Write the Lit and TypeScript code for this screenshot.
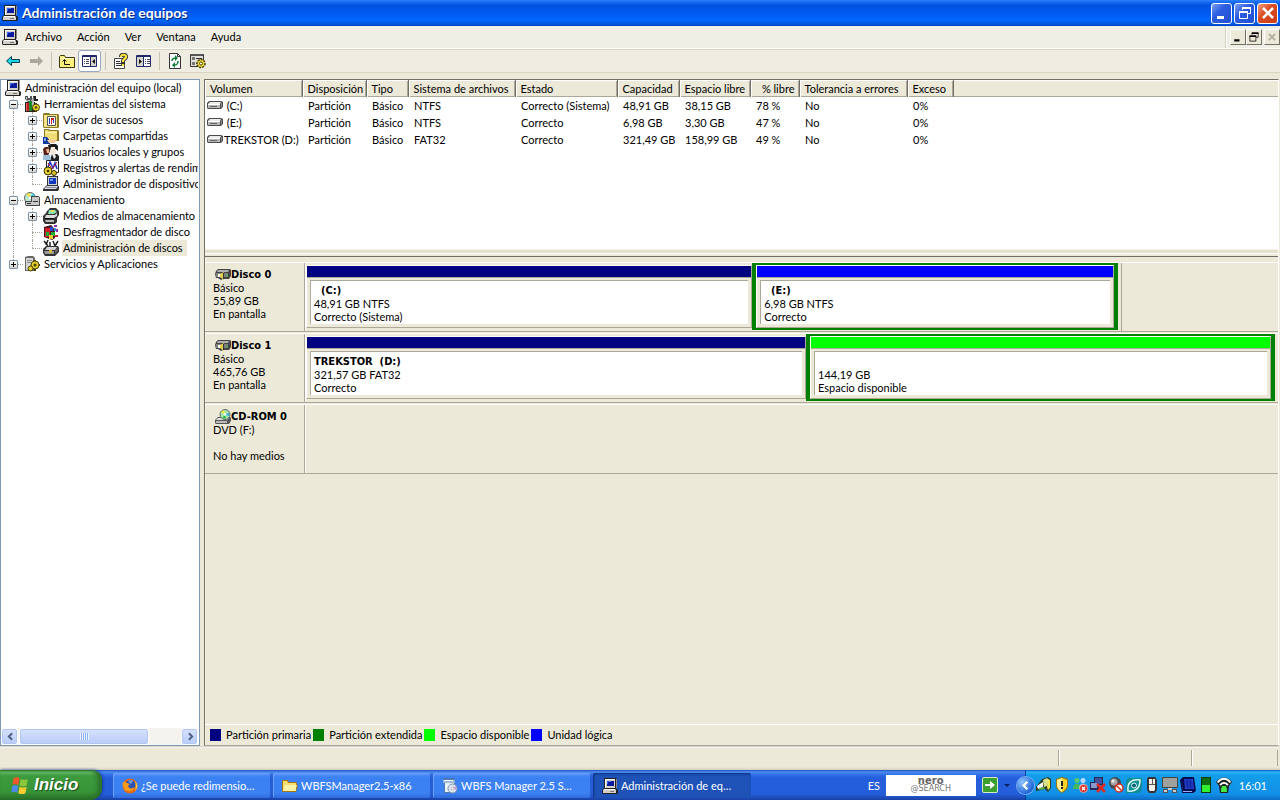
import { LitElement, html, svg, css, nothing, type TemplateResult } from "lit";
import { customElement, property, state } from "lit/decorators.js";
import { classMap } from "lit/directives/class-map.js";
import { styleMap } from "lit/directives/style-map.js";

const glyphs: Record<string, TemplateResult> = {
  computer: svg`<path fill="#222" d="M2 0h12l1 1v9h-1v1h1l1 1v3l-1 1H1l-1-1v-3l2-2z"/><path fill="#d4d0c8" d="M3 1h10v9H3z"/><path fill="#fff" d="M3 1h10v1H4v8H3z"/><path fill="#0a1a9c" d="M5 3h7v5H5z"/><path fill="#3a6af0" d="M5 3h4v1H6v2H5z"/><path fill="#888" d="M14 1h1v9h-1z"/><path fill="#d4d0c8" d="M2 11h11l1 1v3H1v-3z"/><path fill="#fff" d="M2 11h11v1H2z"/><path fill="#777" d="M8 13h4v1H8z"/>`,
  laptop: svg`<path fill="#333" d="M4 0h11v10h1v3l-1 2H0v-2l4-4z"/><path fill="#cfd3dc" d="M5 1h9v8H5z"/><path fill="#1238c0" d="M6 2h7v6H6z"/><path fill="#6f97f5" d="M7 3h3v2H7z"/><path fill="#d7dbe5" d="M4 10h11l-2 3H1z"/><path fill="#889" d="M4 11h9v1H3z"/>`,
  tools: svg`<path fill="#555" d="M1 0h3v2h2V0h2v4L6 6H4L1 3z"/><path fill="#c9c9c9" d="M2 1h1v3h3v1H4L2 3z"/><path fill="#222" d="M1 6h10v10H1z"/><path fill="#c02020" d="M2 7h3v8H2z"/><path fill="#e86060" d="M2 7h1v8H2z"/><path fill="#168a2c" d="M5 5h3v10H5z"/><path fill="#b8b8b8" d="M8 2h2v10H8z"/><path fill="#222" d="M9 0h3v3h2v2h-4z"/><circle cx="12" cy="11.500" r="3.500" fill="#e5cf30" stroke="#4a4200"/><circle cx="12" cy="11.500" r="1.200" fill="#4a4200"/><path fill="#4a4200" d="M11 7h2v1h-2zM11 15h2v1h-2z"/>`,
  events: svg`<path fill="#8c7a20" d="M0 2l1-1h5l1 1h8l1 1v12l-1 1H1l-1-1z"/><path fill="#f3e58a" d="M1 3h13v12H1z"/><path fill="#fff" stroke="#555" d="M4.500 4.500h8v9h-8z"/><path fill="#2a3cd0" d="M6 6h1v6H6zM10 8h1v3h-1z"/><path fill="#d02020" d="M8 6h3v2H9v4H8z"/>`,
  sharedFolder: svg`<path fill="#8c7a20" d="M1 1h5l1 1h8l1 1v10H1z"/><path fill="#f0dd78" d="M2 2h3l1 1h8v9H2z"/><path fill="#fff6b8" d="M2 4h12v1H2z"/><path fill="#123a9c" d="M0 9h4l3 4v3H0z"/><path fill="#7fa2e8" d="M1 10h2v3H1z"/><path fill="#f4c9a0" d="M4 12h9l1 1-3 2H6z"/>`,
  users: svg`<path fill="#191919" d="M5 1l3-1h5l2 2v5l-2-2H9L6 7z"/><path fill="#f7e8dc" d="M8 3h5v6l-2 2H9L7 7z"/><path fill="#222" d="M12 3h1v2h-1zM9 10h5l2 2v4H7z"/><path fill="#e8e8e8" d="M9 10h3l1 3-2 2z"/><path fill="#5a2018" d="M0 5l2-2h3l2 4-2 5H1z"/><path fill="#e8b896" d="M3 5h3v4H4z"/><path fill="#9cc0dc" d="M0 11h7l1 5H0z"/>`,
  perf: svg`<path fill="#fff" stroke="#222" d="M3.500.500h12v12h-12z"/><path fill="none" stroke="#1428c8" stroke-width="1.500" d="M5 7l2-5 3 6 2-5 2 6"/><path fill="none" stroke="#d02020" d="M5 3l4 6 5-7"/><circle cx="5" cy="11" r="4" fill="#e5cf30" stroke="#3a3400"/><circle cx="5" cy="11" r="1.300" fill="#3a3400"/><circle cx="11" cy="13" r="2.500" fill="#d8c030" stroke="#3a3400"/>`,
  storage: svg`<circle cx="6" cy="6" r="5.500" fill="#b8e8d0" stroke="#666"/><path fill="#f0e040" d="M6 6L2 2l4-1z"/><path fill="#40c8e0" d="M6 6l5-2-2-3z"/><circle cx="6" cy="6" r="1.300" fill="#fff"/><path fill="#444" d="M7 4h8l1 2v8H2l-1-2V9h6z"/><path fill="#c8c8c8" d="M8 5h7v8H8zM2 10h6v3H2z"/><path fill="#333" d="M9 9h5v1H9zM3 11h4v1H3z"/>`,
  removable: svg`<path fill="#333" d="M4 3l3-3h6l3 3v4l-2 3v4l-2 2H2l-2-3V8l3-3z"/><path fill="#8ee0b0" d="M6 2h6l2 2-3 2H5z"/><path fill="#f4e65a" d="M8 2h3v2H8z"/><path fill="#ddd" d="M3 7h9l2-2v3l-3 2H2z"/><path fill="#111" d="M2 10h9v1H2z"/><path fill="#bbb" d="M2 12h9v2H3z"/>`,
  defrag: svg`<path fill="#501018" d="M1 3l7-2 2 2 2 4v7l-3 2-8-3z"/><path fill="#d02028" d="M2 4h5v9H2z"/><path fill="#2848d0" d="M7 3h3v4H7z"/><path fill="#20a838" d="M3 8h3v4H3zM8 8h4v4H8z"/><path fill="#e8d030" d="M6 11h4v4H6z"/><path fill="#9030b0" d="M11 1h3v2h-3zM13 5h2v3h-2z"/><path fill="#2898d0" d="M11 4h2v3h-2z"/><path fill="#d02028" d="M12 11h3v2h-3z"/>`,
  diskMgmt: svg`<path fill="none" stroke="#222" stroke-width="1.500" d="M1 1l4 5M5 0L3 5M10 1l2 5M15 1l-3 5M7 2v4"/><path fill="#333" d="M3 6h12l1 2v4l-4 4H2l-2-3V9z"/><path fill="#d4d4d4" d="M4 7h10l-2 3H2z"/><path fill="#999" d="M1 11h10v3H2z"/><path fill="#666" d="M12 10l3-2v3l-3 3z"/><path fill="#d8b830" d="M6 10h3v3H6z"/>`,
  services: svg`<path fill="#666" d="M1 1l3-1h5l2 2v13H1z"/><path fill="#d8d8d4" d="M2 2h7v12H2z"/><path fill="#888" d="M3 4h5v1H3zM3 6h5v1H3z"/><circle cx="11" cy="9" r="4" fill="#e5cf30" stroke="#4a4200"/><circle cx="11" cy="9" r="1.500" fill="#4a4200"/><circle cx="6.500" cy="12.500" r="2.500" fill="#e5cf30" stroke="#4a4200"/><path fill="#4a4200" d="M10 4h2v1h-2zM10 13h2v2h-2zM15 8h1v2h-1z"/>`,
  back: svg`<path fill="#18d8e8" stroke="#053c50" d="M1.500 8l5-4.500v3h8v3h-8v3z"/>`,
  forward: svg`<path fill="#aaa89c" d="M15 8l-5-5v3H2v4h8v3z"/>`,
  up: svg`<path fill="#fdf07c" stroke="#3c3608" d="M.500 14.500v-11l1-1h4l1 2h9v10z"/><path fill="#fffbc8" d="M1 5h14v1H1z"/><path fill="none" stroke="#111" d="M5.500 7v4.500H11M3.500 8.500l2-2 2 2"/>`,
  treeToggle: svg`<path fill="#fff" stroke="#22286c" d="M.500 2.500h14v11H.500z"/><path fill="#22286c" d="M1 2h13v2H1zM8 4h1v10H8z"/><path fill="#d6d4ca" d="M9 4h5v9H9z"/><path stroke="#446" d="M2 6.500h1M4 6.500h3M2 8.500h1M4 8.500h3M2 10.500h1M4 10.500h3"/><path fill="#111" d="M13 6v5L10 8.500z"/>`,
  paneToggle: svg`<path fill="#fff" stroke="#22286c" d="M.500 2.500h14v11H.500z"/><path fill="#22286c" d="M1 2h13v2H1zM7 4h1v10H7z"/><path fill="#d6d4ca" d="M1 4h6v9H1z"/><path stroke="#446" d="M9 6.500h1M11 6.500h3M9 8.500h1M11 8.500h3M9 10.500h1M11 10.500h3"/><path fill="#111" d="M3 6v5l3-2.500z"/>`,
  help: svg`<path fill="#fff" stroke="#444" d="M1.500 5.500h10v10h-10z"/><path fill="#333" d="M3 8h4v1H3zM3 10h6v1H3zM3 12h6v1H3z"/><path fill="none" stroke="#333" stroke-width="4" d="M8 4c0-3 5-3 5 0 0 2-3 2-3 4v4"/><path fill="none" stroke="#fbe83a" stroke-width="2.200" d="M8 4c0-3 5-3 5 0 0 2-3 2-3 4v1M10 11v2"/>`,
  refresh: svg`<path fill="#fff" stroke="#333" d="M2.500.500h8l3 3v12h-11z"/><path fill="none" stroke="#333" d="M10.500.500v3h3"/><path fill="none" stroke="#12803a" stroke-width="1.500" d="M5 8c0-3 2-3 4-3M11 8c0 4-2 4-4 4"/><path fill="#12803a" d="M8 2l3 3-3 3zM8 9v6l-3-3z"/>`,
  settings: svg`<path fill="#e4e2d8" stroke="#333" d="M.500 1.500h13v12H.500z"/><path fill="#555" d="M1 1h12v2H1z"/><path fill="#777" d="M2 4h3v3H2zM2 9h3v3H2z"/><path stroke="#333" d="M6 5.500h6M6 10.500h2"/><circle cx="11" cy="10.500" r="4" fill="#f0dc40" stroke="#4a4200" stroke-dasharray="2 1" stroke-width="1.500"/><circle cx="11" cy="10.500" r="1.500" fill="#fff" stroke="#4a4200"/>`,
  drive: svg`<path fill="#4c4c4c" d="M2 3h12l2 1v5l-2 2H1l-1-1V5z"/><path fill="#ececec" d="M3 4h11l-1 2H1z"/><path fill="#b8b8b8" d="M1 6h12v4H1z"/><path fill="#888" d="M14 5h1v4l-1 1z"/><path fill="#fff" d="M1 6h12v1H1z"/><path fill="#666" d="M3 8h7v1H3z"/>`,
  disk: svg`<path fill="#444" d="M3 2h12l1 1v6l-2 3H8l-2 1-3-2H1L0 7l1-3z"/><path fill="#b0b0b0" d="M3 3h11l-1 2H2z"/><path fill="#808080" d="M1 6h12v4H1z"/><path fill="#e0cf50" d="M5 7l4-2v8L5 10z"/><path fill="#fff" d="M3 7h2v3H3z"/><path fill="#333" d="M8 6h1v6H8z"/><path fill="#20c838" d="M11 8h2v1h-2z"/>`,
  cdrom: svg`<path fill="#555" d="M3 8h12l1 1v3l-2 3H1l-1-1v-3z"/><path fill="#e0e0dc" d="M3 9h11l-2 2H1z"/><path fill="#bbb" d="M1 12h11v2H1z"/><circle cx="10" cy="5.500" r="5" fill="#a8e4a8" stroke="#666"/><path fill="#f6ee40" d="M10 5.500L6 3l3-2z"/><path fill="#38b8d8" d="M10 5.500l4-2v4z"/><path fill="#28b848" d="M10 5.500l-3 4h4z"/><circle cx="10" cy="5.500" r="1.300" fill="#fff"/>`,
  firefox: svg`<circle cx="8" cy="8" r="7.500" fill="#e66a10"/><circle cx="8.500" cy="7" r="5" fill="#2a50b0"/><path fill="#6fa4e8" d="M6 3c2-1 4-1 5 0L9 6z"/><path fill="#f89a1c" d="M1 4c2 0 3 0 4 1l3 1-2 2c1 3 4 3 6 1 0 4-4 5-7 4C2 12 0 8 1 4z"/><path fill="#fcd040" d="M13 3c3 3 3 7 0 10 1-3 1-6 0-10z"/>`,
  folder: svg`<path fill="#a87810" d="M0 3l1-1h5l1 2h7l1 1v2h1l-2 7H1l-1-1z"/><path fill="#f8de70" d="M1 3h4l1 2h8v8H1z"/><path fill="#fdf3a8" d="M3 7h12l-2 6H1z"/>`,
  installer: svg`<path fill="#5078a8" d="M2 0h9l2 2v13H2z"/><path fill="#e8f0f8" d="M3 3h9v11H3z"/><path fill="#9cb8d8" d="M1 2h12v3H1z"/><path fill="#fff" d="M2 2h9v1H2z"/><circle cx="10.500" cy="10.500" r="4.500" fill="#dce6f2" stroke="#7c94b4"/><path fill="#c8a0e0" d="M10 10l4-2v4z"/><circle cx="10.500" cy="10.500" r="1.300" fill="#fff" stroke="#888" stroke-width=".5"/>`,
  flag: svg`<path fill="#f0582c" d="M3 2c2-1.500 4-1 5 0L7 7.500c-2-1-3.500-1-5 0z"/><path fill="#8cc83c" d="M9 2.500c2 1 4 1 6 0L14 8c-2 1-4 1-6 0z"/><path fill="#4c8cf0" d="M2 8.500c1.500-1 3-1 5 0L6 14c-2-1-3.500-1-5 0z"/><path fill="#fccc30" d="M8 9c2 1 4 1 6 0l-1 5.500c-2 1-4 1-6 0z"/>`,
  power: svg`<path fill="#2c3c28" d="M6 2l6-2 3 2v9l-3 4-3-3-9 2v-4z"/><path fill="#d8e090" d="M7 3l4-2 2 2-2 6-3 1z"/><path fill="#fff" d="M1 9l6-4v5l-5 2z"/><path fill="#60b040" d="M3 11l5-1 1 2-6 1z"/><path fill="#f4e850" d="M12 2l2 1v8l-2 2-1-3z"/>`,
  shield: svg`<path fill="#9c7400" d="M8 0l6 2v6c0 4-3 6-6 8-3-2-6-4-6-8V2z"/><path fill="#fcd428" d="M8 1l5 2v5c0 3-2 5-5 7-3-2-5-4-5-7V3z"/><path fill="#fff09c" d="M8 1v14c-3-2-5-4-5-7V3z"/><path fill="#222" d="M7 4h2v5H7zM7 10h2v2H7z"/>`,
  people: svg`<circle cx="5" cy="3.500" r="2.500" fill="#58c868"/><path fill="#48b858" d="M1 12c0-7 8-7 8 0z"/><circle cx="11" cy="3.500" r="2.500" fill="#b8d8fc"/><path fill="#a8ccf8" d="M7 11c0-6 8-6 8 0z"/><circle cx="11.500" cy="11.500" r="4" fill="#d82820" stroke="#f8c8c0" stroke-width=".7"/><path stroke="#fff" stroke-width="1.500" d="M10 10l3 3M13 10l-3 3"/>`,
  netOff: svg`<path fill="#222850" d="M4 0h9v8H4zM0 5h9v8H0z"/><path fill="#40509c" d="M5 1h7v6H5z"/><path fill="#8c98cc" d="M1 6h6v5H1z"/><path stroke="#e02820" stroke-width="2.500" d="M7 7l8 8M15 7l-8 8"/>`,
  soundOff: svg`<circle cx="7" cy="6" r="6" fill="#484848"/><circle cx="6" cy="5" r="3.500" fill="#a8a8a8"/><circle cx="5" cy="4" r="1.500" fill="#eee"/><circle cx="11" cy="11" r="4" fill="#fff" stroke="#d03020" stroke-width="1.500"/><path stroke="#d03020" stroke-width="1.500" d="M8 8l6 6"/>`,
  eye: svg`<path fill="#128c94" d="M5 1h11v9c0 4-2 6-6 6H0V6c0-3 1-5 5-5z"/><path fill="none" stroke="#d8fcf4" stroke-width="1.500" d="M2 14C1 6 5 2 14 3c0 8-4 12-12 11z"/><circle cx="8" cy="8.500" r="2.500" fill="#0c6074" stroke="#d8fcf4"/>`,
  mouse: svg`<path fill="#333" d="M4 0h7l2 3v10l-2 3H5l-2-3V2z"/><path fill="#f4f0e4" d="M5 2h6v11l-1 1H6l-1-1z"/><path fill="#555" d="M8 2h1v5H8zM5 7h6v1H5z"/>`,
  display: svg`<path fill="#a0a09c" stroke="#444" d="M.500.500h15v10H.500z"/><path fill="#555" d="M1 12h5v4H1zM10 12h5v4h-5z"/><path fill="#ccc" d="M2 13h3v2H2zM11 13h3v2h-3zM6 11h4v2H6z"/>`,
  chip: svg`<path fill="#060c50" d="M3 0h11l2 14-3 2H2L0 3z"/><path fill="#2444d8" d="M4 2h9l1 10H5z"/><path stroke="#0a1880" stroke-width=".6" d="M4 4h8M4 6h9M5 8h8M5 10h8M7 2l1 10M10 2l1 10"/><path fill="#9cb0f0" d="M1 4l2 10h9v1H3z"/>`,
  meter: svg`<path fill="#0c3c0c" d="M3 0h10v16H3z"/><path fill="#0c6c10" d="M4 1h8v7H4z"/><path fill="#30f030" d="M4 8h8v7H4z"/>`,
  wifi: svg`<path fill="#222" d="M0 5c4-6 12-6 16 0l-3 4-1 7H4L3 9z"/><path fill="none" stroke="#fff" stroke-width="1.800" d="M1.500 5.500c4-5 9-5 13 0M4 8c3-3 5-3 8 0"/><path fill="#40e840" d="M6 9h4l1 3v3H5v-3z"/>`,
  goArrow: svg`<rect width="16" height="16" rx="2" fill="#d4ecc8"/><rect x="1" y="1" width="14" height="14" rx="1" fill="#3ca030"/><path fill="#fff" d="M3 7h5V4l5 4-5 4V9H3z"/>`,
  chevronLeft: svg`<path fill="none" stroke="currentColor" stroke-width="2.500" d="M10 4L6 8l4 4"/>`,
  chevronRight: svg`<path fill="none" stroke="currentColor" stroke-width="2.500" d="M6 4l4 4-4 4"/>`,
  minimize: svg`<path fill="currentColor" d="M3 11h7v3H3z"/>`,
  restore: svg`<path fill="none" stroke="currentColor" d="M5.500 5V2.500h8v6H11"/><path fill="currentColor" d="M5 2h9v2H5zM2 6h9v2H2z"/><path fill="none" stroke="currentColor" d="M2.500 6.500h8v7h-8z"/>`,
  close: svg`<path fill="none" stroke="currentColor" stroke-width="2.500" d="M3 3l10 10M13 3L3 13"/>`,
};

const icon = (name: string, size = 16) =>
  html`<svg class="icon" width=${size} height=${size} viewBox="0 0 16 16" aria-hidden="true">${glyphs[name]}</svg>`;

const shared = css`
  :host { font-family: Lato, "Open Sans", sans-serif; font-size: 11px; color: #000; }
  * { box-sizing: border-box; }
  .icon { display: block; flex: none; }
  button { font: inherit; color: inherit; margin: 0; padding: 0; border: 0; background: none; }
`;

interface Node { label: string; icon: string; depth: number; box?: "+" | "-"; last?: boolean; }

const tree: Node[] = [
  { label: "Administración del equipo (local)", icon: "computer", depth: 0 },
  { label: "Herramientas del sistema", icon: "tools", depth: 1, box: "-" },
  { label: "Visor de sucesos", icon: "events", depth: 2, box: "+" },
  { label: "Carpetas compartidas", icon: "sharedFolder", depth: 2, box: "+" },
  { label: "Usuarios locales y grupos", icon: "users", depth: 2, box: "+" },
  { label: "Registros y alertas de rendimiento", icon: "perf", depth: 2, box: "+" },
  { label: "Administrador de dispositivos", icon: "laptop", depth: 2, last: true },
  { label: "Almacenamiento", icon: "storage", depth: 1, box: "-" },
  { label: "Medios de almacenamiento extraíbles", icon: "removable", depth: 2, box: "+" },
  { label: "Desfragmentador de disco", icon: "defrag", depth: 2 },
  { label: "Administración de discos", icon: "diskMgmt", depth: 2, last: true },
  { label: "Servicios y Aplicaciones", icon: "services", depth: 1, box: "+", last: true },
];

@customElement("console-tree")
class ConsoleTree extends LitElement {
  @state() selected = 10;
  static styles = [shared, css`
    :host { display: flex; flex-direction: column; background: #fff; border: 1px solid #7f9db9; overflow: hidden; min-width: 0; padding-right: 1px; }
    ul { list-style: none; margin: 0; padding: 0 0 0 3px; flex: 1; overflow: hidden; }
    li { display: flex; height: 16px; align-items: center; white-space: nowrap; }
    .cell { width: 19px; height: 16px; flex: none; display: grid; grid-template-columns: 9px 10px; align-items: center; }
    .line { border-right: 1px dotted #a8a598; height: 16px; width: 10px; grid-area: 1 / 1; }
    .line.half { height: 8px; align-self: start; }
    .dash { border-top: 1px dotted #a8a598; grid-area: 1 / 2; }
    .box { grid-area: 1 / 1 / 2 / 3; width: 9px; height: 9px; margin-left: 5px; border: 1px solid #7b92ad; border-radius: 1px; background: linear-gradient(#fff, #d8d3c6); display: grid; place-items: center; }
    .box svg { display: block; }
    .icon { margin-left: 1px; }
    .label { margin-left: 3px; padding: 0 4px 0 1px; height: 16px; line-height: 16px; }
    .selected { background: #ece9d8; }
    .scroll { display: flex; height: 17px; background: #f4f3ee; gap: 1px; }
    .arrow, .thumb { border: 1px solid #fff; border-radius: 3px; background: linear-gradient(#d6e2fd, #b9ccf8); box-shadow: inset 0 0 0 1px #b2c6f4; color: #4d6185; display: grid; place-items: center; }
    .arrow { width: 17px; height: 17px; }
    .thumb { flex: 0 0 66%; }
    .gap { flex: 1; }
    .grip { width: 9px; height: 7px; background: repeating-linear-gradient(90deg, #eef4fe 0 1px, #8cb0f8 1px 2px); }
  `];
  row(n: Node, i: number) {
    return html`<li role="treeitem" aria-level=${n.depth + 1} aria-selected=${i === this.selected} @click=${() => (this.selected = i)}>
      ${n.depth === 2 ? html`<span class="cell"><span class="line"></span></span>` : nothing}
      ${n.depth > 0 ? html`<span class="cell">
        <span class=${classMap({ line: true, half: !!n.last })}></span><span class="dash"></span>
        ${n.box ? html`<button class="box" aria-label=${n.label}><svg width="5" height="5" viewBox="0 0 5 5"><path fill="#000" d=${n.box === "+" ? "M0 2h5v1H0zM2 0h1v5H2z" : "M0 2h5v1H0z"} /></svg></button>` : nothing}
      </span>` : nothing}
      ${icon(n.icon)}<span class=${classMap({ label: true, selected: i === this.selected })}>${n.label}</span></li>`;
  }
  render() {
    return html`<ul role="tree">${tree.map((n, i) => this.row(n, i))}</ul>
      <div class="scroll"><button class="arrow" aria-label="Izquierda">${icon("chevronLeft", 13)}</button><span class="thumb"><span class="grip"></span></span><span class="gap"></span><button class="arrow" aria-label="Derecha">${icon("chevronRight", 13)}</button></div>`;
  }
}

const columns: [string, number][] = [
  ["Volumen", 97], ["Disposición", 64], ["Tipo", 42], ["Sistema de archivos", 107], ["Estado", 102],
  ["Capacidad", 62], ["Espacio libre", 71], ["% libre", 49], ["Tolerancia a errores", 108], ["Exceso", 46],
];
const volumes = [
  [" (C:)", "Partición", "Básico", "NTFS", "Correcto (Sistema)", "48,91 GB", "38,15 GB", "78 %", "No", "0%"],
  [" (E:)", "Partición", "Básico", "NTFS", "Correcto", "6,98 GB", "3,30 GB", "47 %", "No", "0%"],
  ["TREKSTOR (D:)", "Partición", "Básico", "FAT32", "Correcto", "321,49 GB", "158,99 GB", "49 %", "No", "0%"],
];

@customElement("volume-list")
class VolumeList extends LitElement {
  static styles = [shared, css`
    :host { display: block; background: #fff; overflow: hidden; }
    .head { background: #ece9d8; box-shadow: inset 0 -1px #aca899, inset 0 1px #fff; height: 17px; }
    table { table-layout: fixed; border-collapse: collapse; width: 0; }
    th { height: 17px; padding: 0 4px 0 5px; text-align: left; font-weight: normal; white-space: nowrap; background: #ece9d8; border-right: 1px solid #716f64; box-shadow: inset 1px 1px #fff, inset -1px -1px #aca899; }
    td { height: 17px; padding: 0 0 0 6px; white-space: nowrap; line-height: 15px; }
    tr td:first-child { padding-left: 2px; }
    .num { text-align: right; }
    .vol { display: flex; align-items: center; gap: 1px; white-space: pre; }
  `];
  render() {
    return html`<div class="head"><table>
      <colgroup>${columns.map(([, w]) => html`<col style=${styleMap({ width: w + "px" })}>`)}</colgroup>
      <thead><tr>${columns.map(([c]) => html`<th class=${classMap({ num: c === "% libre" })}>${c}</th>`)}</tr></thead>
      <tbody>${volumes.map((v) => html`<tr>${v.map((c, i) => i === 0 ? html`<td><span class="vol">${icon("drive")}${c}</span></td>` : html`<td>${c}</td>`)}</tr>`)}</tbody>
    </table></div>`;
  }
}

interface Part { name: string; size: string; status: string; kind: "primary" | "logical" | "free"; share: number; }
interface Disk { name: string; icon: string; lines: string[]; span: number; parts: Part[]; }

const disks: Disk[] = [
  { name: "Disco 0", icon: "disk", lines: ["Básico", "55,89 GB", "En pantalla"], span: 84, parts: [
    { name: "  (C:)", size: "48,91 GB NTFS", status: "Correcto (Sistema)", kind: "primary", share: 446 },
    { name: "  (E:)", size: "6,98 GB NTFS", status: "Correcto", kind: "logical", share: 358 },
  ] },
  { name: "Disco 1", icon: "disk", lines: ["Básico", "465,76 GB", "En pantalla"], span: 100, parts: [
    { name: "TREKSTOR  (D:)", size: "321,57 GB FAT32", status: "Correcto", kind: "primary", share: 500 },
    { name: " ", size: "144,19 GB", status: "Espacio disponible", kind: "free", share: 461 },
  ] },
  { name: "CD-ROM 0", icon: "cdrom", lines: ["DVD (F:)", "\u00a0", "No hay medios"], span: 100, parts: [] },
];

@customElement("disk-map")
class DiskMap extends LitElement {
  static styles = [shared, css`
    :host { display: flex; flex-direction: column; background: #ece9d8; line-height: 13px; }
    .rows { flex: 1; display: flex; flex-direction: column; gap: 1px; padding-top: 5px; }
    .disk { display: flex; height: 70px; border-top: 1px solid #fff; border-bottom: 1px solid #aca899; }
    .label { width: 100px; flex: none; padding: 5px 0 0 8px; border-right: 1px solid #aca899; box-shadow: 1px 0 #fff; }
    .name { display: flex; align-items: center; height: 13px; padding-left: 2px; }
    .bold { font-family: "DejaVu Sans Condensed", "DejaVu Sans", sans-serif; font-weight: bold; white-space: pre; }
    .track { flex: 1; min-width: 0; }
    .parts { display: flex; height: 68px; padding: 0 3px 1px 1px; }
    .parts.partial { border-right: 1px solid #aca899; }
    .part { display: flex; flex-direction: column; min-width: 0; flex-basis: 0; padding: 2px 0; }
    .inner { flex: 1; display: flex; flex-direction: column; border: 1px solid #aca899; border-top-color: #fff; border-left-color: #fff; }
    .boxed { border: 4px solid #008000; border-top-width: 2px; border-bottom-width: 2px; padding: 0; }
    .bar { height: 12px; border-bottom: 1px solid #aca899; }
    .primary .bar, .swatch.primary { background: #000080; }
    .logical .bar, .swatch.logical { background: #0000ff; }
    .free .bar, .swatch.free { background: #00ff00; }
    .swatch.extended { background: #008000; }
    .info { flex: 1; margin: 2px 3px 3px; padding: 3px 3px 0; background: #fff; border-left: 1px solid #aca899; border-top: 1px solid #aca899; white-space: pre; overflow: hidden; }
    .legend { display: flex; height: 20px; margin-bottom: 1px; align-items: center; border-top: 1px solid #fff; padding-left: 5px; gap: 2px; }
    .item { display: flex; align-items: center; gap: 5px; }
    .swatch { width: 11px; height: 12px; }
  `];
  part(p: Part) {
    return html`<div class=${classMap({ part: true, [p.kind]: true, boxed: p.kind !== "primary" })} style=${styleMap({ flexGrow: String(p.share) })}>
      <div class="inner"><div class="bar"></div><div class="info"><div class="bold">${p.name}</div><div>${p.size}</div><div>${p.status}</div></div></div>
    </div>`;
  }
  render() {
    return html`<div class="rows">${disks.map((d) => html`<section class="disk">
        <div class="label"><div class="name bold">${icon(d.icon)}${d.name}</div>${d.lines.map((l) => html`<div>${l}</div>`)}</div>
        <div class="track">${d.parts.length ? html`<div class=${classMap({ parts: true, partial: d.span < 100 })} style=${styleMap({ width: d.span + "%" })}>${d.parts.map((p) => this.part(p))}</div>` : nothing}</div>
      </section>`)}</div>
      <div class="legend">
        ${[["primary", "Partición primaria"], ["extended", "Partición extendida"], ["free", "Espacio disponible"], ["logical", "Unidad lógica"]].map(([k, t]) => html`<span class="item"><span class="swatch ${k}"></span>${t}</span>`)}
      </div>`;
  }
}

@customElement("task-bar")
class TaskBar extends LitElement {
  @property({ type: String }) time = "16:01";
  static styles = [shared, css`
    :host { display: flex; height: 30px; color: #fff; background: linear-gradient(#1f4fc0 0, #4a8cf0 2px, #2f6ce4 5px, #245edb 8px, #245edb 24px, #1941a5 30px); }
    .start { width: 102px; display: flex; align-items: center; gap: 5px; padding-left: 10px; border-radius: 0 10px 12px 0; font: italic bold 17px "Liberation Sans", sans-serif; text-shadow: 1px 1px 1px #1c4a1c; background: linear-gradient(#2f7a2f 0, #6cc06c 2px, #3d9a3d 6px, #379437 22px, #286f28 30px); box-shadow: inset -4px 0 5px #2a6e2a, 1px 0 3px #173a9c; }
    .tasks { flex: 1; display: flex; gap: 2px; padding: 3px 0 0 11px; min-width: 0; }
    .task { width: 158px; height: 25px; display: flex; align-items: center; gap: 3px; padding: 0 9px; border-radius: 2px; text-align: left; white-space: nowrap; background: linear-gradient(#5c9afc, #3c81f3 4px, #3c81f3 20px, #2f6ad8); box-shadow: inset 1px 1px #6ca2fc, inset -1px 0 #2a5cc8; }
    .active { background: #1e52b7; box-shadow: inset 1px 1px 2px #0f2f7c; }
    .extras { display: flex; align-items: center; }
    .lang { width: 18px; }
    .search { display: grid; width: 90px; height: 21px; background: #fff; }
    .search input { grid-area: 1 / 1; width: 100%; height: 21px; border: 0; padding: 0; background: transparent; }
    .logo { grid-area: 1 / 1; display: grid; place-items: center; align-content: center; line-height: 8px; font-family: "DejaVu Sans", sans-serif; font-weight: bold; pointer-events: none; }
    .nero { font-size: 10px; color: #666; }
    .at { font-size: 8px; font-weight: normal; color: #777; }
    .go { margin-left: 6px; }
    .drop { width: 27px; display: grid; place-items: center; padding-right: 9px; }
    .drop::after { content: ""; border: 3px solid transparent; border-top-color: #0a2060; border-bottom: 0; }
    .tray { display: flex; align-items: center; gap: 2px; padding-right: 13px; background: linear-gradient(#0c59b9 0, #2cb4f8 2px, #139ee9 5px, #1290e8 24px, #0c6cc4 30px); border-left: 1px solid #0a3c98; }
    .hide { width: 17px; height: 17px; margin-left: -9px; border-radius: 50%; background: radial-gradient(circle at 5px 5px, #8cc4fc, #2468d8 12px); box-shadow: 0 0 0 1px #7cb0f0; display: grid; place-items: center; }
    .clock { margin-left: 5px; }
  `];
  render() {
    const tasks: [string, string][] = [["firefox", "¿Se puede redimensio…"], ["folder", "WBFSManager2.5-x86"], ["installer", "WBFS Manager 2.5 S…"], ["computer", "Administración de eq…"]];
    return html`<button class="start">${icon("flag", 19)}Inicio</button>
      <div class="tasks">${tasks.map(([i, t], n) => html`<button class=${classMap({ task: true, active: n === 3 })}>${icon(i)}${t}</button>`)}</div>
      <div class="extras"><span class="lang">ES</span>
        <label class="search"><input type="text" aria-label="nero search"><span class="logo"><span class="nero">nero</span><span class="at">@SEARCH</span></span></label>
        <button class="go" aria-label="Buscar">${icon("goArrow")}</button><button class="drop" aria-label="Opciones"></button></div>
      <div class="tray"><button class="hide" aria-label="Ocultar iconos">${icon("chevronLeft", 15)}</button>
        ${["power", "shield", "people", "netOff", "soundOff", "eye", "mouse", "display", "chip", "meter", "wifi"].map((t) => icon(t))}
        <time class="clock">${this.time}</time></div>`;
  }
}

@customElement("app-root")
class AppRoot extends LitElement {
  static styles = [shared, css`
    :host { display: flex; flex-direction: column; height: 100vh; background: #ece9d8; overflow: hidden; }
    .title { display: flex; height: 26px; align-items: center; padding: 0 2px; gap: 4px; background: linear-gradient(#2b82f8 0, #1a6cf4 2px, #0053e0 5px, #0058ee 12px, #0066fc 20px, #0050d8 25px, #003cb4 26px); }
    h1 { flex: 1; margin: 0; color: #fff; font-size: 14px; line-height: 16px; padding-bottom: 1px; font-weight: bold; text-shadow: 1px 1px #0f2a80; }
    .wins { display: flex; gap: 2px; }
    .win { width: 21px; height: 21px; border: 1px solid #fff; border-radius: 3px; color: #fff; display: grid; place-items: center; background: linear-gradient(135deg, #7ca0f4, #2c5ce0 40%, #2450d0); }
    .win.x { background: linear-gradient(135deg, #f0a080, #dc4c24 40%, #c83c14); }
    .menubar { display: flex; height: 23px; align-items: center; padding-left: 2px; background: #f0efe6; border-bottom: 1px solid #fff; box-shadow: 0 1px #d8d4c0; position: relative; }
    .menus { display: flex; flex: 1; }
    .menu { padding: 0 8px 0 7px; height: 20px; line-height: 18px; }
    .mdi { display: flex; padding-left: 3px; height: 22px; align-items: center; border-left: 1px solid #fff; box-shadow: -1px 0 #d4d0bc; }
    .mdi button { width: 16px; height: 16px; display: grid; place-items: center; background: #ece9d8; border: 1px solid; border-color: #fff #716f64 #716f64 #fff; }
    .mdi .off { margin-left: 2px; color: #aca899; }
    .toolbar { display: flex; height: 24px; align-items: center; padding-left: 1px; background: #efede2; border-bottom: 1px solid #d8d4c0; }
    .tool { width: 23px; height: 22px; display: grid; place-items: center; }
    .pressed { background: #fff; border: 1px solid #98a8c0; border-radius: 3px; }
    .sep { width: 8px; height: 18px; display: grid; place-items: center; }
    .sep::after { content: ""; width: 1px; height: 18px; background: #c8c4b0; }
    .panes { flex: 1; display: grid; grid-template-columns: 200px 1fr; gap: 4px; padding: 6px 1px 0 0; min-height: 0; }
    .right { display: grid; grid-template-rows: 176px 1fr; min-width: 0; border: 1px solid; border-color: #716f64 #fff #aca899 #716f64; }
    disk-map { border-top: 1px solid #716f64; box-shadow: inset 1px 0 #f8f6ec; }
    .split { height: 7px; background: #ece9d8; border-top: 1px solid #f4f2e8; box-shadow: inset 0 3px #e4e0cf, inset 0 4px #fff; }
    .top { display: flex; flex-direction: column; }
    volume-list { flex: 1; }
    .status { display: flex; justify-content: flex-end; height: 24px; padding: 4px 2px; background: linear-gradient(#aca899 0, #fff 1px, #ece9d8 2px, #ece9d8 21px, #d4d0bc 24px); }
    .field { width: 133px; border-left: 1px solid #aca899; box-shadow: inset 1px 0 #fff; }
    .field.end { width: 87px; border-right: 1px solid #aca899; }
  `];
  render() {
    return html`
      <header class="title">${icon("computer")}<h1>Administración de equipos</h1>
        <div class="wins"><button class="win" aria-label="Minimizar">${icon("minimize")}</button><button class="win" aria-label="Restaurar">${icon("restore")}</button><button class="win x" aria-label="Cerrar">${icon("close")}</button></div></header>
      <nav class="menubar">${icon("computer")}<div class="menus">${["Archivo", "Acción", "Ver", "Ventana", "Ayuda"].map((m) => html`<button class="menu">${m}</button>`)}</div>
        <div class="mdi"><button aria-label="Minimizar ventana">${icon("minimize", 12)}</button><button aria-label="Restaurar ventana">${icon("restore", 12)}</button><button class="off" aria-label="Cerrar ventana">${icon("close", 10)}</button></div></nav>
      <div class="toolbar" role="toolbar">${["back", "forward", "|", "up", "treeToggle", "|", "help", "paneToggle", "|", "refresh", "settings"].map((t) =>
        t === "|" ? html`<span class="sep"></span>` : html`<button class=${classMap({ tool: true, pressed: t === "treeToggle" })} aria-label=${t}>${icon(t)}</button>`)}</div>
      <main class="panes"><console-tree></console-tree>
        <div class="right"><div class="top"><volume-list></volume-list><div class="split"></div></div><disk-map></disk-map></div></main>
      <footer class="status"><span class="field"></span><span class="field end"></span></footer>
      <task-bar></task-bar>`;
  }
}
